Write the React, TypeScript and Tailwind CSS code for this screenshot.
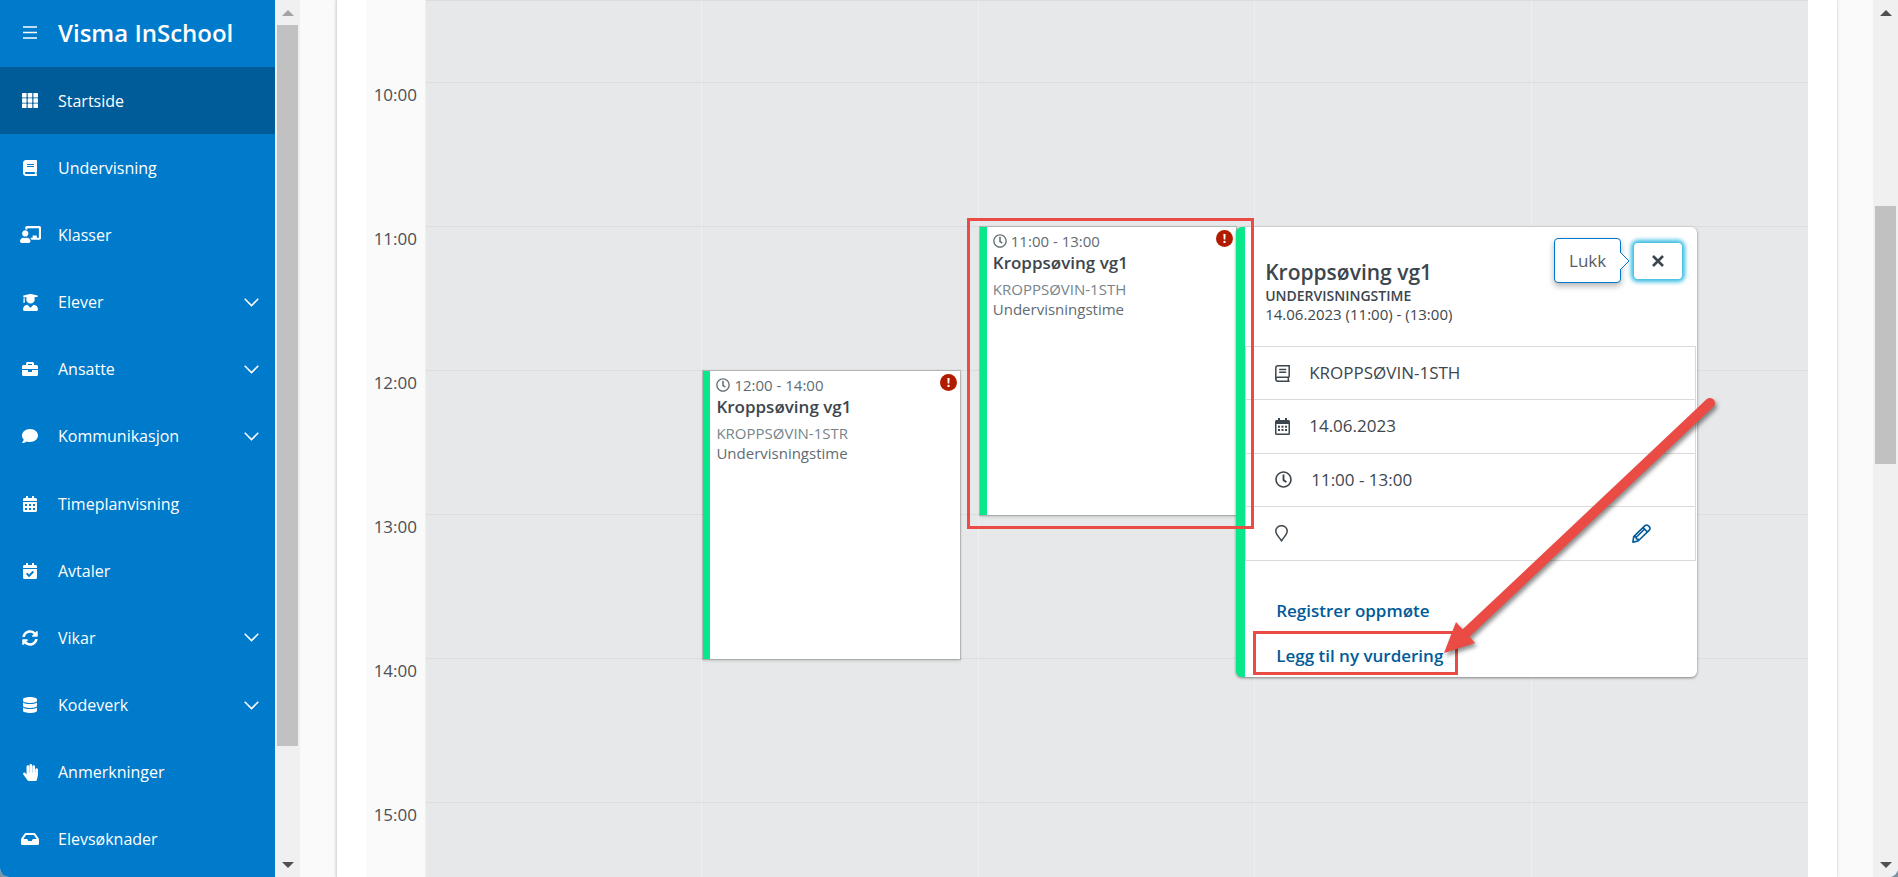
import React from 'react';
import {
  FaBook,
  FaBriefcase,
  FaCalendarAlt,
  FaCalendarCheck,
  FaChalkboardTeacher,
  FaComment,
  FaDatabase,
  FaHandPaper,
  FaInbox,
  FaRegClock,
  FaSyncAlt,
  FaUserGraduate,
} from 'react-icons/fa';

const GridIcon = () => (
  <svg viewBox="0 0 16 15" fill="currentColor" className="h-[15px] w-4">
    {[0, 5.7, 11.4].map((x) =>
      [0, 5.3, 10.6].map((y) => <rect key={`${x}-${y}`} x={x} y={y} width="4.6" height="4.4" rx="0.4" />)
    )}
  </svg>
);

const BookIcon = () => (
  <svg viewBox="0 0 15 17" fill="none" stroke="currentColor" strokeWidth="1.5" className="h-[17px] w-[15px]">
    <path d="M14.2 12.2V.8H3A2.2 2.2 0 0 0 .8 3v11A2.2 2.2 0 0 0 3 16.2h11.6M.8 14A2 2 0 0 1 3 12.2h11.2M13.3 12.5v3.5M4.2 4.4h7M4.2 7.2h7" />
  </svg>
);

const CalendarIcon = () => (
  <svg viewBox="0 0 15 17" fill="currentColor" className="h-[17px] w-[15px]">
    <path d="M3 0h2v2h5V0h2v2h1.5A1.5 1.5 0 0 1 15 3.5v12a1.5 1.5 0 0 1-1.5 1.5h-12A1.5 1.5 0 0 1 0 15.5v-12A1.5 1.5 0 0 1 1.5 2H3zM1.5 6v9.5h12V6z" fillRule="evenodd" />
    {[3, 6.5, 10].map((x) =>
      [7.7, 11].map((y) => <rect key={`${x}-${y}`} x={x} y={y} width="2" height="2" />)
    )}
  </svg>
);

const PinIcon = () => (
  <svg viewBox="0 0 13 17" fill="none" stroke="currentColor" strokeWidth="1.5" className="h-[17px] w-[13px]">
    <path d="M6.5 16C5.5 13.4.8 9.8.8 6.2a5.7 5.5 0 0 1 11.4 0c0 3.6-4.7 7.2-5.7 9.8z" strokeLinejoin="round" />
  </svg>
);

const PencilIcon = () => (
  <svg viewBox="0 0 19 19" fill="none" stroke="currentColor" strokeWidth="1.6" className="size-[19px]">
    <path
      d="M.9 18.1L1.7 12.6 13 1.7a2.4 2.4 0 0 1 3.3.1l1.1 1.1a2.3 2.3 0 0 1-.1 3.3L6.1 17z"
      strokeLinejoin="round"
    />
    <path d="M1.7 12.6l2.4.3.3 1.9 1.6.3.1 1.9M4.8 12.7l7.6-7.4M11.1 3.6l4.4 4.4" />
  </svg>
);

interface NavItem {
  label: string;
  icon: React.ReactNode;
  expandable?: boolean;
  active?: boolean;
}

const navItems: NavItem[] = [
  { label: 'Startside', icon: <GridIcon />, active: true },
  { label: 'Undervisning', icon: <FaBook size={16} /> },
  { label: 'Klasser', icon: <FaChalkboardTeacher size={21} /> },
  { label: 'Elever', icon: <FaUserGraduate size={17} />, expandable: true },
  { label: 'Ansatte', icon: <FaBriefcase size={16} />, expandable: true },
  { label: 'Kommunikasjon', icon: <FaComment size={16} />, expandable: true },
  { label: 'Timeplanvisning', icon: <FaCalendarAlt size={16} /> },
  { label: 'Avtaler', icon: <FaCalendarCheck size={16} /> },
  { label: 'Vikar', icon: <FaSyncAlt size={16} />, expandable: true },
  { label: 'Kodeverk', icon: <FaDatabase size={16} />, expandable: true },
  { label: 'Anmerkninger', icon: <FaHandPaper size={17} /> },
  { label: 'Elevsøknader', icon: <FaInbox size={18} /> },
];

const hours = ['10:00', '11:00', '12:00', '13:00', '14:00', '15:00'];

const Sidebar = () => (
  <aside className="flex h-full w-[275px] shrink-0 flex-col bg-[#007aca] pb-1 text-white">
    <div className="flex h-[67px] shrink-0 items-center pb-0.5">
      <button aria-label="Meny" className="flex w-[60px] justify-center">
        <svg viewBox="0 0 14 13" stroke="currentColor" strokeWidth="1.7" className="h-[13px] w-[14px]">
          <path d="M0 1h14M0 6.5h14M0 12h14" />
        </svg>
      </button>
      <h1 className="-ml-0.5 text-2xl leading-8 font-semibold">Visma InSchool</h1>
    </div>
    <nav className="flex min-h-0 flex-1 flex-col">
      {navItems.map((item) => (
        <a
          key={item.label}
          href="#"
          className={`flex flex-1 items-center pr-4 text-base ${item.active ? 'bg-[#005b99]' : ''}`}
        >
          <span className="flex w-[60px] justify-center">{item.icon}</span>
          <span className="-ml-0.5 flex-1">{item.label}</span>
          {item.expandable && (
            <svg viewBox="0 0 15 9" fill="none" stroke="currentColor" strokeWidth="1.5" className="h-[9px] w-[15px]">
              <path d="M.7.8l6.8 6.8L14.3.8" />
            </svg>
          )}
        </a>
      ))}
    </nav>
  </aside>
);

interface ScrollTrackProps {
  thumb: string;
  upColor: string;
}

const ScrollTrack = ({ thumb, upColor }: ScrollTrackProps) => (
  <div className="relative flex h-full w-[25px] shrink-0 flex-col items-center justify-between bg-[#f0f0f0] pt-2.5 pb-[9px]">
    <svg viewBox="0 0 12 6" className={`h-1.5 w-3 ${upColor}`} fill="currentColor">
      <path d="M6 0l6 6H0z" />
    </svg>
    <svg viewBox="0 0 12 6" className="h-1.5 w-3 text-[#505050]" fill="currentColor">
      <path d="M6 6L0 0h12z" />
    </svg>
    <div className={`absolute inset-x-0.5 bg-[#c1c1c1] ${thumb}`} />
  </div>
);

interface LessonProps {
  time: string;
  code: string;
  className: string;
  children?: React.ReactNode;
}

const Lesson = ({ time, code, className, children }: LessonProps) => (
  <article
    className={`relative mt-px mr-[19px] -mb-px ml-px border-l-[7px] border-[#08e88a] bg-white pt-1 pl-1.5 text-[15px] leading-5 text-[#5f6b73] shadow-[0_0_1px_1px_rgba(0,0,0,0.18),0_2px_3px_rgba(0,0,0,0.12)] ${className}`}
  >
    <div className="flex items-center gap-1">
      <FaRegClock size={14} />
      {time}
    </div>
    <h3 className="text-[17px] leading-6 font-semibold text-[#3d464d]">Kroppsøving vg1</h3>
    <p className="mt-1 text-[#76858c]">{code}</p>
    <p>Undervisningstime</p>
    <svg viewBox="0 0 17 17" className="absolute top-[3px] right-[3px] size-[17px]">
      <circle cx="8.5" cy="8.5" r="8.5" fill="#b01c00" />
      <path d="M7.4 4h2.2l-.3 5.6H7.7z" fill="#fff" />
      <circle cx="8.5" cy="11.9" r="1.2" fill="#fff" />
    </svg>
    {children}
  </article>
);

const LessonDetails = () => (
  <section className="absolute top-0 left-full w-[461px] overflow-hidden rounded-md border-l-[9px] border-[#08e88a] bg-white text-[#3d464d] shadow-[0_1px_3px_rgba(0,0,0,0.45)]">
    <header className="flex h-[119px] items-start justify-between pl-5">
      <div className="pt-[31px] text-[15px] leading-[19px]">
        <h2 className="text-[21px] leading-7 font-semibold">Kroppsøving vg1</h2>
        <p className="text-sm leading-[19px] font-semibold">UNDERVISNINGSTIME</p>
        <p>14.06.2023 (11:00) - (13:00)</p>
      </div>
      <div className="flex items-center gap-[13px] pt-[11px] pr-[15px]">
        <div
          role="tooltip"
          className="relative flex h-[45px] items-center rounded border border-[#0077c8] bg-white px-[14px] text-[17px] text-[#555d63] shadow-[0_3px_6px_rgba(0,0,0,0.3)]"
        >
          Lukk
          <svg viewBox="0 0 10 18" className="absolute top-[13px] left-full h-[18px] w-2.5">
            <path d="M0 0l9 9-9 9" fill="#fff" stroke="#0077c8" />
          </svg>
        </div>
        <button
          aria-label="Lukk"
          className="flex h-9 w-12 items-center justify-center rounded bg-white shadow-[0_0_4px_3px_#35bae2]"
        >
          <svg viewBox="0 0 12 12" stroke="currentColor" strokeWidth="2.6" className="size-3">
            <path d="M1 1l10 10M11 1L1 11" />
          </svg>
        </button>
      </div>
    </header>
    <ul className="mr-px grid h-[215px] grid-rows-4 divide-y divide-[#d9dadb] border border-[#d9dadb] text-[17px]">
      <li className="flex items-center gap-[19px] pl-[29px]">
        <BookIcon />
        KROPPSØVIN-1STH
      </li>
      <li className="flex items-center gap-[19px] pl-[29px]">
        <CalendarIcon />
        14.06.2023
      </li>
      <li className="flex items-center gap-[19px] pl-[29px]">
        <FaRegClock size={17} />
        11:00 - 13:00
      </li>
      <li className="flex items-center justify-between pr-11 pl-[29px]">
        <PinIcon />
        <button aria-label="Rediger rom" className="text-[#005b99]">
          <PencilIcon />
        </button>
      </li>
    </ul>
    <div className="flex flex-col items-start gap-[21px] pt-[38px] pb-[9px] pl-[31px] text-[17px] leading-6 font-semibold text-[#005b99]">
      <a href="#">Registrer oppmøte</a>
      <a href="#">Legg til ny vurdering</a>
    </div>
  </section>
);

/* røde markeringer oppå timen og detaljkortet */
const Annotations = () => (
  <>
    <div className="absolute -top-[9px] -right-[18px] -bottom-[14px] -left-5 border-[3px] border-[#ea4b45]" />
    <div className="absolute top-[404px] left-[266px] h-11 w-[205px] border-[3px] border-[#ea4b45]" />
    <svg
      viewBox="0 0 290 270"
      className="absolute top-[163px] left-[449px] h-[270px] w-[290px] text-[#ea4b45] drop-shadow-[2px_3px_2px_rgba(0,0,0,0.45)]"
      fill="currentColor"
    >
      <path d="M274 13L29 244" stroke="currentColor" strokeWidth="10" strokeLinecap="round" />
      <path d="M8 263L20 232 39 253z" />
    </svg>
  </>
);

const Calendar = () => (
  <div className="flex h-full min-w-0 flex-1 overflow-hidden">
    <div className="w-[59px] shrink-0 bg-[#fafafa] pt-[82px] pr-2 text-right text-[17px] leading-[26px] text-[#4a4f54]">
      {hours.map((hour) => (
        <div key={hour} className="h-36">
          {hour}
        </div>
      ))}
    </div>
    <div className="grid flex-1 grid-cols-5 grid-rows-[82px_repeat(6,144px)] border-l border-[#eeeff0] bg-[#e6e8e9]">
      {[1, 2, 3, 4, 5, 6, 7].map((row) => (
        <div
          key={row}
          className="col-span-full col-start-1 row-span-1 grid grid-cols-5 divide-x divide-[#eeeff0] border-t border-[#dbdde0]"
          style={{ gridRowStart: row }}
        >
          <div />
          <div />
          <div />
          <div />
          <div />
        </div>
      ))}
      <Lesson time="12:00 - 14:00" code="KROPPSØVIN-1STR" className="col-start-2 row-span-2 row-start-4" />
      <Lesson time="11:00 - 13:00" code="KROPPSØVIN-1STH" className="z-10 col-start-3 row-span-2 row-start-3">
        <LessonDetails />
        <Annotations />
      </Lesson>
    </div>
  </div>
);

export default function App() {
  return (
    <div className="h-screen bg-[#7b93a5]">
      <div className="flex h-full overflow-hidden rounded-b-[9px] bg-[#fafafa] font-['Open_Sans',sans-serif]">
        <Sidebar />
        <ScrollTrack thumb="top-[25px] bottom-[131px]" upColor="text-[#a3a3a3]" />
        <main className="mr-9 ml-9 flex min-w-0 flex-1 border-l border-[#dcdddd] bg-white px-[29px] shadow-[0_0_3px_rgba(0,0,0,0.2)]">
          <Calendar />
        </main>
        <ScrollTrack thumb="top-[206px] bottom-[413px]" upColor="text-[#505050]" />
      </div>
    </div>
  );
}
